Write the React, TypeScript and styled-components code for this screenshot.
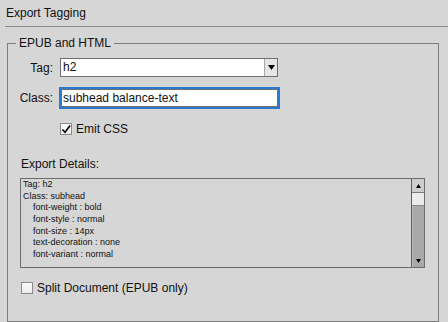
import React from "react";
import styled, { createGlobalStyle } from "styled-components";

const Global = createGlobalStyle`
  html, body { margin: 0; padding: 0; background: #d6d6d6; }
  body {
    width: 448px; height: 322px; overflow: hidden;
    font-family: "Liberation Sans", Arial, sans-serif;
    font-size: 12px; color: #111;
  }
  #root { width: 448px; height: 322px; }
`;

const Panel = styled.div`
  width: 448px;
  height: 322px;
  display: flex;
  flex-direction: column;
`;

const Header = styled.div`
  margin-left: 5px;
  padding: 6px 0 6px 1px;
  line-height: 14px;
  border-bottom: 1px solid #8c8c8c;
`;

const Group = styled.fieldset`
  margin: 9px 9px 0 7px;
  padding: 0;
  border: 1px solid #7d7d7d;
  flex: 1;
  min-width: 0;
  display: flex;
  flex-direction: column;
`;

const Legend = styled.legend`
  margin-left: 8px;
  padding: 0 3px;
  line-height: 14px;
  font-size: 12px;
`;

const Body = styled.div`
  padding-top: 8px;
  display: flex;
  flex-direction: column;
`;

const FieldRow = styled.div<{ $top?: number }>`
  display: flex;
  align-items: center;
  gap: 7px;
  margin-top: ${(p) => p.$top ?? 0}px;
`;

const Label = styled.label`
  width: 45px;
  text-align: right;
  line-height: 14px;
`;

const Select = styled.div`
  width: 218px;
  height: 19px;
  box-sizing: border-box;
  border: 1px solid #6f6f6f;
  background: #fff;
  display: flex;
  align-items: center;
`;

const SelectValue = styled.span`
  flex: 1;
  padding-left: 2px;
  line-height: 17px;
`;

const DropButton = styled.span`
  width: 13px;
  height: 17px;
  box-sizing: border-box;
  border-left: 1px solid #a9a9a9;
  background: #e6e6e6;
  display: flex;
  align-items: center;
  justify-content: center;
`;

const TextInput = styled.input`
  width: 217px;
  height: 18px;
  margin: 2px 0 2px 1px;
  box-sizing: border-box;
  border: 1px solid #6f6f6f;
  box-shadow: 0 0 0 2px #2a78cf;
  background: #fff;
  padding: 0 0 0 1px;
  font: inherit;
  font-size: 12px;
  color: #111;
  outline: none;
`;

const CheckRow = styled.label<{ $top: number; $left: number }>`
  display: flex;
  align-items: center;
  gap: 4px;
  margin-top: ${(p) => p.$top}px;
  padding-left: ${(p) => p.$left}px;
  line-height: 14px;
`;

const Box = styled.span`
  width: 12px;
  height: 12px;
  box-sizing: border-box;
  border: 1px solid #8a8a8a;
  background: linear-gradient(#fbfbfb, #ececec);
  display: flex;
  align-items: center;
  justify-content: center;
`;

const SectionLabel = styled.div`
  margin-top: 21px;
  padding-left: 13px;
  line-height: 14px;
`;

const Details = styled.div`
  margin: 7px 0 0 12px;
  width: 405px;
  height: 90px;
  box-sizing: border-box;
  border: 1px solid #6c6c6c;
  display: flex;
`;

const DetailsText = styled.div`
  flex: 1;
  padding-left: 2px;
  font-size: 9px;
  line-height: 11.67px;
  overflow: hidden;
`;

const Line = styled.div<{ $indent?: boolean }>`
  padding-left: ${(p) => (p.$indent ? 10 : 0)}px;
  white-space: pre;
`;

const Scrollbar = styled.div`
  width: 13px;
  box-sizing: border-box;
  border-left: 1px solid #5e5e5e;
  display: flex;
  flex-direction: column;
  background: #a9a9a9;
`;

const ScrollButton = styled.div`
  height: 14px;
  background: #cdcdcd;
  border-bottom: 1px solid #7b7b7b;
  box-sizing: border-box;
  display: flex;
  align-items: center;
  justify-content: center;
`;

const Thumb = styled.div`
  height: 13px;
  background: #ebebeb;
  border-bottom: 1px solid #8a8a8a;
  box-sizing: border-box;
`;

const Track = styled.div`
  flex: 1;
  display: flex;
  align-items: flex-end;
  justify-content: center;
  padding-bottom: 4px;
  border-left: 1px solid #bcbcbc;
`;

const Down = ({ w = 5, h = 4 }: { w?: number; h?: number }) => (
  <svg width={w} height={h} viewBox={`0 0 ${w} ${h}`}>
    <polygon points={`0,0 ${w},0 ${w / 2},${h}`} fill="#000" />
  </svg>
);

const Up = ({ w = 5, h = 4 }: { w?: number; h?: number }) => (
  <svg width={w} height={h} viewBox={`0 0 ${w} ${h}`}>
    <polygon points={`0,${h} ${w},${h} ${w / 2},0`} fill="#000" />
  </svg>
);

const Check = () => (
  <svg width="11" height="11" viewBox="0 0 11 11">
    <path d="M1.5 5.5 L4.5 8.5 L10 1" fill="none" stroke="#000" strokeWidth="1.8" />
  </svg>
);

const lines: { t: string; indent?: boolean }[] = [
  { t: "Tag: h2" },
  { t: "Class: subhead" },
  { t: "font-weight : bold", indent: true },
  { t: "font-style : normal", indent: true },
  { t: "font-size : 14px", indent: true },
  { t: "text-decoration : none", indent: true },
  { t: "font-variant : normal", indent: true },
];

export default function App() {
  return (
    <>
      <Global />
      <Panel>
        <Header>Export Tagging</Header>
        <Group>
          <Legend>EPUB and HTML</Legend>
          <Body>
            <FieldRow>
              <Label>Tag:</Label>
              <Select>
                <SelectValue>h2</SelectValue>
                <DropButton>
                  <Down w={7} h={5} />
                </DropButton>
              </Select>
            </FieldRow>
            <FieldRow $top={10}>
              <Label>Class:</Label>
              <TextInput defaultValue="subhead balance-text" />
            </FieldRow>
            <CheckRow $top={13} $left={52}>
              <Box>
                <Check />
              </Box>
              Emit CSS
            </CheckRow>
            <SectionLabel>Export Details:</SectionLabel>
            <Details>
              <DetailsText>
                {lines.map((l, i) => (
                  <Line key={i} $indent={l.indent}>
                    {l.t}
                  </Line>
                ))}
              </DetailsText>
              <Scrollbar>
                <ScrollButton>
                  <Up />
                </ScrollButton>
                <Thumb />
                <Track>
                  <Down />
                </Track>
              </Scrollbar>
            </Details>
            <CheckRow $top={13} $left={13}>
              <Box />
              Split Document (EPUB only)
            </CheckRow>
          </Body>
        </Group>
      </Panel>
    </>
  );
}
